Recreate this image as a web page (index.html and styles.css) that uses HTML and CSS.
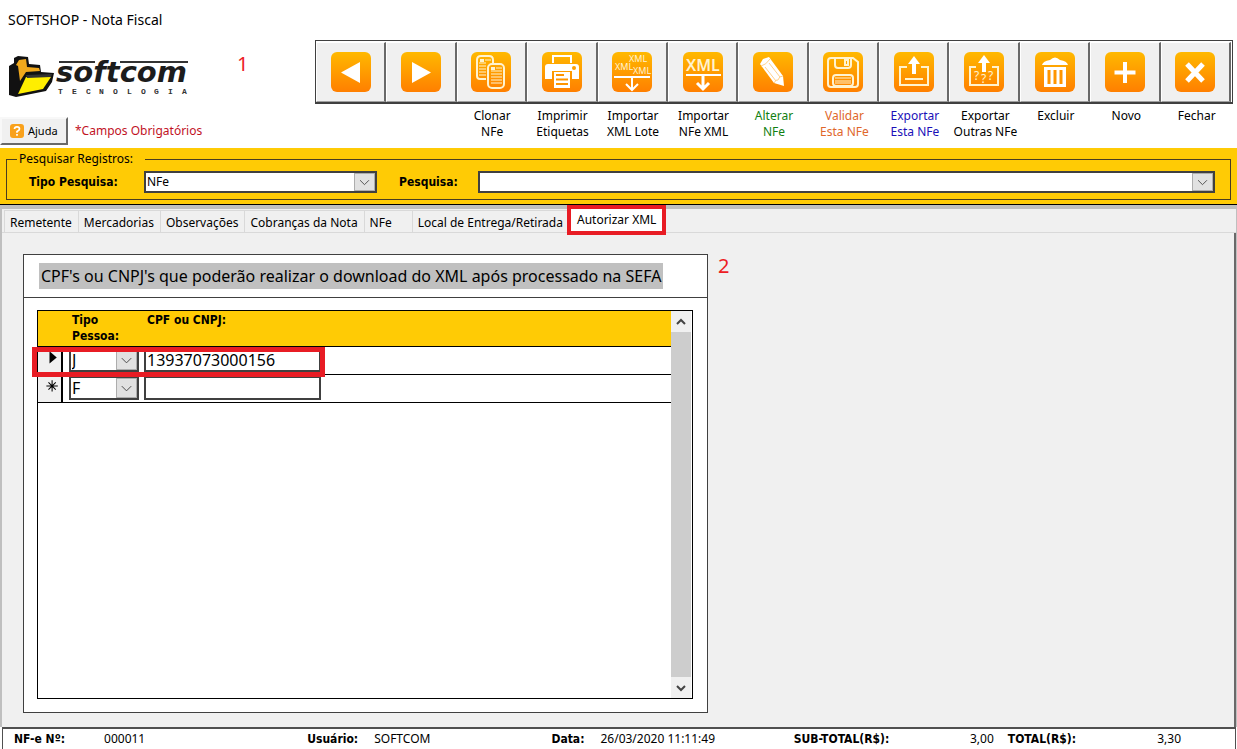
FILE: index.html
```html
<!DOCTYPE html>
<html lang="pt-BR">
<head>
    <meta charset="UTF-8">
    <meta name="viewport" content="width=device-width, initial-scale=1.0">
    <title>SOFTSHOP - Nota Fiscal</title>
    <link rel="stylesheet" href="styles.css">
</head>
<body>
    <header class="top">
        <h1 class="window-title">SOFTSHOP - Nota Fiscal</h1>

        <div class="top-row">
            <div class="brand">
                <div class="brand-row">
                    <svg class="logo" viewBox="0 0 184 46" role="img" aria-label="softcom tecnologia">
                        <path d="M1 14 L6 11 L6 6 L10 4 L20 5 L21 12 L32 13 L33 20 L46 21 L44 30 L38 39 L8 45 L1 43 Z" fill="#111"/>
                        <path d="M11 8 L18 7 L19 15 L31 16 L32 19 L18 20 L12 29 L10 14 L8 13 Z" fill="#f0a81c"/>
                        <path d="M18 25 L43 25 L35 37 L10 42 Z" fill="#ffee00"/>
                        <path d="M18 23 L44 22 L43 25 L19 26 Z" fill="#333"/>
                        <path d="M51 10 H87 M112 10 H180" stroke="#333" stroke-width="2"/>
                        <text x="48" y="30" class="logo-name">softcom</text>
                        <text y="42" x="50 64 78 91 105 119 133 146 160 174" class="logo-sub">TECNOLOGIA</text>
                    </svg>
                    <span class="step">1</span>
                </div>
                <div class="help-row">
                    <button class="help" type="button">
                        <svg class="help-icon" viewBox="0 0 14 14" aria-hidden="true">
                            <rect width="14" height="14" rx="3" fill="#f9a11b"/>
                            <path d="M4.5 5 Q4.500 2.800 7 2.800 Q9.500 2.800 9.500 5 Q9.500 6.200 7 7.500 V8.800 M7 10 V11.800" fill="none" stroke="#fff" stroke-width="1.700"/>
                        </svg>
                        Ajuda
                    </button>
                    <span class="required">*Campos Obrigatórios</span>
                </div>
            </div>

            <div class="actions">
                <div class="toolbar">
                    <button type="button" aria-label="Anterior">
                        <svg class="icon" viewBox="0 0 40 40"><path d="M10 20.500 L29 10 V31 Z" fill="#fff"/></svg>
                    </button>
                    <button type="button" aria-label="Próximo">
                        <svg class="icon" viewBox="0 0 40 40"><path d="M30 20.500 L11 10 V31 Z" fill="#fff"/></svg>
                    </button>
                    <button type="button" aria-label="Clonar NFe">
                        <svg class="icon" viewBox="0 0 40 40">
                            <g fill="none" stroke="#fff3cf" stroke-width="2">
                                <path d="M15 27 H9 Q6 27 6 24 V8 Q6 4 10 4 H18 Q22 4 22 8 V11"/>
                                <rect x="17" y="12" width="16" height="24" rx="4"/>
                            </g>
                            <path d="M8 11 H15 M8 14 H15 M8 17 H15 M8 20 H15 M8 23 H15 M14 8 H20 M20 19 H31 M20 22 H31 M20 25 H31 M20 28 H31 M20 31 H31 M25 16 H31" stroke="#fff3cf"/>
                            <path d="M9 7 H13 V10 H9 Z M20 15 H24 V18 H20 Z" fill="#fff3cf"/>
                        </svg>
                    </button>
                    <button type="button" aria-label="Imprimir Etiquetas">
                        <svg class="icon" viewBox="0 0 40 40">
                            <path d="M11 11 V4 H29 V11" fill="none" stroke="#fff" stroke-width="2"/>
                            <path d="M6 12 H34 Q37 12 37 15 V27 H30 V19 H10 V27 H3 V15 Q3 12 6 12 Z" fill="#fff"/>
                            <circle cx="32" cy="16" r="2" fill="#ffa000"/>
                            <rect x="12" y="20" width="16" height="16" fill="#fff"/>
                            <path d="M14 23 H22 M14 27.500 H26 M14 32 H26" stroke="#ff9500" stroke-width="2"/>
                        </svg>
                    </button>
                    <button type="button" aria-label="Importar XML Lote">
                        <svg class="icon" viewBox="0 0 40 40">
                            <g class="icon-text" font-size="9">
                                <text x="17" y="10">XML</text>
                                <text x="3" y="18">XML</text>
                                <text x="21" y="22">XML</text>
                            </g>
                            <path d="M2 25 H38 M20 25 V37 M14 32 L20 38 L26 32" fill="none" stroke="#fff" stroke-width="2"/>
                        </svg>
                    </button>
                    <button type="button" aria-label="Importar NFe XML">
                        <svg class="icon" viewBox="0 0 40 40">
                            <text class="icon-text icon-text-bold" x="3" y="19" font-size="16">XML</text>
                            <path d="M3 23 H38" stroke="#fff" stroke-width="2"/>
                            <path d="M20 23 V37 M14 31 L20 37 L26 31" fill="none" stroke="#fff" stroke-width="3"/>
                        </svg>
                    </button>
                    <button type="button" aria-label="Alterar NFe">
                        <svg class="icon" viewBox="0 0 40 40">
                            <path d="M7 12 L10 7 L16 5 L30 24 L31 34 L21 31 Z" fill="#fff"/>
                            <path d="M8 14 Q13 13 17 7 M12 15 L23 29 M16 11 L27 25 M21 31 Q23 27 25 28 Q26 24 30 24" fill="none" stroke="#ffd08a"/>
                        </svg>
                    </button>
                    <button type="button" aria-label="Validar Esta NFe">
                        <svg class="icon" viewBox="0 0 40 40">
                            <g fill="none" stroke="#fff3cf" stroke-width="2">
                                <path d="M8 6 H30 L35 10 V32 Q35 35 32 35 H8 Q5 35 5 32 V9 Q5 6 8 6 Z"/>
                                <path d="M12 6 V13 Q12 16 15 16 H25 Q28 16 28 13 V6"/>
                                <rect x="22" y="8" width="3" height="5"/>
                                <rect x="10" y="23" width="20" height="11" rx="3"/>
                            </g>
                            <path d="M12 26 H28 M12 29 H28 M12 31 H28" stroke="#fff3cf"/>
                        </svg>
                    </button>
                    <button type="button" aria-label="Exportar Esta NFe">
                        <svg class="icon" viewBox="0 0 40 40">
                            <path d="M13 15 H6 V33 H34 V15 H27 M11 27 H29 M20 22 V8" fill="none" stroke="#fff3cf" stroke-width="2"/>
                            <path d="M20 4 L26 12 H22 V22 H18 V12 H14 Z" fill="#fff"/>
                        </svg>
                    </button>
                    <button type="button" aria-label="Exportar Outras NFe">
                        <svg class="icon" viewBox="0 0 40 40">
                            <path d="M12 15 H6 V33 H34 V15 H28" fill="none" stroke="#fff3cf" stroke-width="2"/>
                            <path d="M20 3 L26 11 H22 V20 H18 V11 H14 Z" fill="#fff"/>
                            <g class="icon-text" font-size="12">
                                <text x="10" y="28">?</text>
                                <text x="17" y="31">?</text>
                                <text x="24" y="28">?</text>
                            </g>
                        </svg>
                    </button>
                    <button type="button" aria-label="Excluir">
                        <svg class="icon" viewBox="0 0 40 40">
                            <path d="M7 13 Q8 9 15 8 Q20 3 25 8 Q32 9 33 13 Z M9 15 H31 V35 H9 Z" fill="#fff"/>
                            <path d="M14 18 V32 M20 18 V32 M26 18 V32" stroke="#ff9500" stroke-width="3"/>
                        </svg>
                    </button>
                    <button type="button" aria-label="Novo">
                        <svg class="icon" viewBox="0 0 40 40"><path d="M20 10 V31 M9.500 20.500 H30.500" stroke="#fff" stroke-width="4"/></svg>
                    </button>
                    <button type="button" aria-label="Fechar">
                        <svg class="icon" viewBox="0 0 40 40"><path d="M12 12 L28 29 M28 12 L12 29" stroke="#fff" stroke-width="5"/></svg>
                    </button>
                </div>
                <div class="captions">
                    <span></span>
                    <span></span>
                    <span>Clonar<br>NFe</span>
                    <span>Imprimir<br>Etiquetas</span>
                    <span>Importar<br>XML Lote</span>
                    <span>Importar<br>NFe XML</span>
                    <span class="green">Alterar<br>NFe</span>
                    <span class="orange">Validar<br>Esta NFe</span>
                    <span class="blue">Exportar<br>Esta NFe</span>
                    <span>Exportar<br>Outras NFe</span>
                    <span>Excluir</span>
                    <span>Novo</span>
                    <span>Fechar</span>
                </div>
            </div>
        </div>
    </header>

    <form class="search">
        <fieldset>
            <legend>Pesquisar Registros:</legend>
            <label for="tipo" class="label-type">Tipo Pesquisa:</label>
            <span class="combo combo-type">
                <select id="tipo"><option>NFe</option></select>
                <svg class="arrow" viewBox="0 0 20 18" aria-hidden="true"><path d="M5 7 L10 12 L15 7"/></svg>
            </span>
            <label for="pesquisa" class="label-search">Pesquisa:</label>
            <span class="combo combo-wide">
                <select id="pesquisa"><option></option></select>
                <svg class="arrow" viewBox="0 0 20 18" aria-hidden="true"><path d="M5 7 L10 12 L15 7"/></svg>
            </span>
        </fieldset>
    </form>

    <main class="content">
        <nav class="tabs">
            <button type="button">Remetente</button>
            <button type="button">Mercadorias</button>
            <button type="button">Observações</button>
            <button type="button">Cobranças da Nota</button>
            <button type="button" class="tab-short">NFe</button>
            <button type="button" class="tab-last">Local de Entrega/Retirada</button>
            <button type="button" class="active">Autorizar XML</button>
        </nav>

        <section class="page">
            <div class="panel">
                <div class="panel-head">
                    <h2>CPF's ou CNPJ's que poderão realizar o download do XML após processado na SEFA</h2>
                </div>
                <div class="grid-box">
                    <div class="grid-body">
                        <table>
                            <thead>
                                <tr>
                                    <th class="col-mark"></th>
                                    <th class="col-type">Tipo Pessoa:</th>
                                    <th class="col-doc">CPF ou CNPJ:</th>
                                    <th></th>
                                </tr>
                            </thead>
                            <tbody>
                                <tr>
                                    <td class="mark"><svg viewBox="0 0 22 26" aria-hidden="true"><path d="M11 4 L18 10 L11 16 Z"/></svg></td>
                                    <td>
                                        <span class="combo">
                                            <select aria-label="Tipo Pessoa, linha 1"><option>J</option><option>F</option></select>
                                            <svg class="arrow" viewBox="0 0 20 18" aria-hidden="true"><path d="M5 7 L10 12 L15 7"/></svg>
                                        </span>
                                    </td>
                                    <td><input type="text" value="13937073000156" aria-label="CPF ou CNPJ, linha 1"></td>
                                    <td></td>
                                </tr>
                                <tr>
                                    <td class="mark"><svg viewBox="0 0 22 26" aria-hidden="true"><path d="M13.500 5 V16 M8 10.500 H19 M10 7 L17 14 M17 7 L10 14" stroke="#000"/></svg></td>
                                    <td>
                                        <span class="combo">
                                            <select aria-label="Tipo Pessoa, linha 2"><option>F</option><option>J</option></select>
                                            <svg class="arrow" viewBox="0 0 20 18" aria-hidden="true"><path d="M5 7 L10 12 L15 7"/></svg>
                                        </span>
                                    </td>
                                    <td><input type="text" aria-label="CPF ou CNPJ, linha 2"></td>
                                    <td></td>
                                </tr>
                            </tbody>
                        </table>
                        <div class="marker"></div>
                    </div>
                    <div class="scroll">
                        <button type="button" aria-label="Subir"><svg viewBox="0 0 20 20"><path d="M6 12 L10 8 L14 12"/></svg></button>
                        <button type="button" aria-label="Descer"><svg viewBox="0 0 20 20"><path d="M6 8 L10 12 L14 8"/></svg></button>
                    </div>
                </div>
            </div>
            <span class="step">2</span>
        </section>
    </main>

    <footer class="status">
        <div class="item item-number"><b>NF-e Nº:</b><span>000011</span></div>
        <div class="item"><b>Usuário:</b><span>SOFTCOM</span></div>
        <div class="item"><b>Data:</b><span>26/03/2020 11:11:49</span></div>
        <div class="item item-total"><b>SUB-TOTAL(R$):</b><span>3,00</span></div>
        <div class="item item-total"><b>TOTAL(R$):</b><span>3,30</span></div>
    </footer>
</body>
</html>
```
FILE: styles.css
```css
* {
    box-sizing: border-box;
    margin: 0;
    padding: 0;
}

body {
    display: flex;
    flex-direction: column;
    min-height: 100vh;
    background: #fff;
    color: #000;
    font-family: "Noto Sans", Tahoma, sans-serif;
    font-size: 12px;
    line-height: 16px;
}

button,
select,
input {
    font: inherit;
    color: inherit;
}

b,
th,
.search label {
    font-family: "DejaVu Sans Condensed", Tahoma, sans-serif;
    font-weight: 700;
}

/* header */

.window-title {
    height: 40px;
    padding: 10px 8px;
    font-size: 14px;
    font-weight: 400;
    line-height: 20px;
}

.top-row {
    display: grid;
    grid-template-columns: 315px 1fr;
    height: 108px;
    padding-right: 4px;
}

.brand {
    display: flex;
    flex-direction: column;
    justify-content: space-between;
    padding-bottom: 3px;
}

.brand-row {
    display: flex;
    gap: 45px;
    padding: 12px 8px 0;
}

.logo {
    width: 184px;
    height: 46px;
}

.logo-name {
    font: italic bold 29px "DejaVu Sans", sans-serif;
    fill: #1c1c1c;
}

.logo-sub {
    font: bold 8px "Liberation Mono", monospace;
    fill: #333;
}

.step {
    color: #ed1c24;
    font-size: 20px;
    line-height: 24px;
}

.help-row {
    display: flex;
    align-items: center;
    gap: 7px;
}

.help {
    display: flex;
    align-items: center;
    gap: 4px;
    width: 68px;
    height: 28px;
    padding: 0 8px;
    background: #f0f0f0;
    border: 2px solid;
    border-color: #f8f8f8 #696969 #696969 #f8f8f8;
    font-size: 11px;
}

.help-icon {
    width: 14px;
    height: 14px;
}

.required {
    color: #c1121f;
}

.toolbar,
.captions {
    display: grid;
    grid-template-columns: repeat(13, 1fr);
}

.toolbar {
    height: 64px;
    border: 1px solid #404040;
    border-bottom-width: 2px;
    padding: 1px 1px 0 0;
}

.toolbar button {
    display: flex;
    align-items: center;
    justify-content: center;
    background: #f0f0f0;
    border: solid;
    border-width: 1px 2px 1px 1px;
    border-color: #fff #696969 #a0a0a0 #fff;
}

.icon {
    width: 40px;
    height: 40px;
    border-radius: 6px;
    background: linear-gradient(#ffb900, #ff7f00);
}

.icon-text {
    fill: #fff3cf;
    font-family: "Noto Sans", sans-serif;
}

.icon-text-bold {
    font-weight: 600;
}

.captions {
    padding: 4px 1px 0;
    text-align: center;
    white-space: nowrap;
}

.green { color: #118011; }
.orange { color: #e0672a; }
.blue { color: #1a10b8; }

/* search bar */

.search {
    height: 57px;
    padding: 3px 6px 0;
    background: #ffcb05;
    border-bottom: 1px solid #000;
}

.search fieldset {
    display: flex;
    align-items: center;
    height: 49px;
    padding: 0 15px 2px 22px;
    border: 1px solid #4a3d20;
}

.search legend {
    margin-left: -12px;
    padding: 0 12px 0 2px;
}

.label-type {
    width: 115px;
}

.label-search {
    width: 79px;
}

.combo {
    position: relative;
    display: flex;
}

.combo select {
    width: 100%;
    height: 22px;
    padding: 0 1px;
    appearance: none;
    background: #fff;
    border: 2px solid #404040;
    border-radius: 0;
}

.combo-type {
    width: 233px;
    margin-right: 22px;
}

.combo-wide {
    flex: 1;
}

.arrow {
    position: absolute;
    top: 2px;
    right: 2px;
    width: 21px;
    height: 18px;
    background: #e1e1e1;
    border: 1px solid #adadad;
    pointer-events: none;
}

.arrow path,
.scroll path {
    fill: none;
    stroke: #444;
}

/* tabs */

.content {
    display: flex;
    flex: 1;
    flex-direction: column;
    background: #f0f0f0;
    border-top: 4px solid #bfbfbf;
    border-left: 2px solid #bfbfbf;
    border-right: 1px solid #bfbfbf;
}

.tabs {
    display: flex;
    align-items: flex-end;
    height: 24px;
    padding-left: 2px;
    border-bottom: 1px solid #d9d9d9;
}

.tabs button {
    height: 22px;
    padding: 2px 6px 0 5px;
    background: #f0f0f0;
    border: 1px solid #d9d9d9;
    border-width: 1px 0 0 1px;
    white-space: nowrap;
}

.tabs .tab-short {
    padding-right: 20px;
}

.tabs .tab-last {
    padding-right: 4px;
}

.tabs .active {
    z-index: 1;
    height: 30px;
    margin-bottom: -3px;
    padding: 0 6px;
    background: #fff;
    border: 4px solid #e81c24;
}

/* page */

.page {
    display: flex;
    flex: 1;
    align-items: stretch;
    gap: 10px;
    padding: 21px 20px 14px 21px;
    border-right: 2px solid #696969;
}

.panel {
    display: flex;
    flex-direction: column;
    width: 685px;
    background: #fff;
    border: 1px solid #404040;
}

.panel-head {
    padding: 8px 15px;
    border-bottom: 1px solid #404040;
}

.panel-head h2 {
    width: max-content;
    padding: 0 2px;
    background: #c0c0c0;
    font-size: 16px;
    font-weight: 400;
    line-height: 26px;
}

.grid-box {
    display: flex;
    flex: 1;
    margin: 12px 14px 13px 13px;
    border: 1px solid #000;
}

.grid-body {
    position: relative;
    flex: 1;
}

table {
    width: 100%;
    border-collapse: collapse;
    table-layout: fixed;
}

th {
    height: 35px;
    padding: 1px 3px;
    background: #ffcb05;
    border-bottom: 1px solid #000;
    text-align: left;
    vertical-align: top;
}

.col-mark { width: 31px; }
.col-type { width: 75px; }
.col-doc { width: 178px; }

td {
    height: 28px;
    border-bottom: 1px solid #000;
    font-size: 16px;
}

.mark svg {
    display: block;
    width: 25px;
    height: 27px;
    background: #f0f0f0;
    border-right: 2px solid #000;
}

td .combo {
    width: 70px;
}

td .combo select,
td input {
    height: 24px;
    padding: 0 1px;
    background: #fff;
    border: 2px solid #404040;
    line-height: 20px;
}

td .arrow {
    height: 20px;
}

td input {
    display: block;
    width: 177px;
}

.marker {
    position: absolute;
    top: 36px;
    left: -6px;
    width: 293px;
    height: 30px;
    border: 5px solid #e81c24;
    pointer-events: none;
}

.scroll {
    display: flex;
    flex-direction: column;
    justify-content: space-between;
    width: 20px;
    margin-right: 1px;
    background: #cdcdcd;
}

.scroll button {
    height: 21px;
    background: #f0f0f0;
    border: 0;
}

.scroll svg {
    display: block;
    width: 20px;
    height: 20px;
}

.scroll path {
    stroke-width: 2;
}

/* status bar */

.status {
    display: grid;
    grid-template-columns: 293fr 244fr 242fr 214fr 227fr;
    height: 22px;
    margin: 0 1px 0 2px;
    padding: 2px 0 0 11px;
    border: solid #505050;
    border-width: 2px 1px 0 1px;
    white-space: nowrap;
}

.item {
    display: flex;
    gap: 16px;
}

.item-number {
    gap: 39px;
}

.item-total {
    justify-content: space-between;
    padding-right: 14px;
}

.item-total:last-child {
    padding-right: 54px;
}
```
